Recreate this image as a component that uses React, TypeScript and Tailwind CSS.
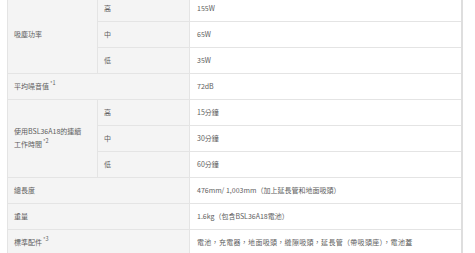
import React from 'react';

const font = { fontFamily: '"Noto Sans CJK TC", "Noto Sans", sans-serif' };

function Sup({ n }: { n: string }) {
  return <span className="text-[5.5px] ml-[1px] relative -top-[4px]">*{n}</span>;
}

export default function App() {
  const cellL = 'bg-[#f4f4f4] border border-[#e4e4e4] px-[6px] align-middle';
  const cellV = 'bg-white border border-[#e4e4e4] px-[7px] align-middle';

  return (
    <div className="w-[475px] h-[253px] overflow-hidden bg-white text-[#5e5e5e]" style={font}>
      <table className="ml-[7px] -mt-[5px] w-[456px] border-collapse table-fixed border-r-2 border-r-[#dedede] text-[7px]">
        <colgroup>
          <col className="w-[90px]" />
          <col className="w-[92px]" />
          <col />
        </colgroup>
        <tbody>
          <tr className="h-[26px]">
            <td rowSpan={3} className={cellL}>吸塵功率</td>
            <td className={cellL}>高</td>
            <td className={cellV}>155W</td>
          </tr>
          <tr className="h-[26px]">
            <td className={cellL}>中</td>
            <td className={cellV}>65W</td>
          </tr>
          <tr className="h-[26px]">
            <td className={cellL}>低</td>
            <td className={cellV}>35W</td>
          </tr>
          <tr className="h-[26px]">
            <td colSpan={2} className={cellL}>
              平均噪音值<Sup n="1" />
            </td>
            <td className={cellV}>72dB</td>
          </tr>
          <tr className="h-[26px]">
            <td rowSpan={3} className={cellL + ' leading-[13px]'}>
              使用BSL36A18的連續
              <br />
              工作時間<Sup n="2" />
            </td>
            <td className={cellL}>高</td>
            <td className={cellV}>15分鐘</td>
          </tr>
          <tr className="h-[26px]">
            <td className={cellL}>中</td>
            <td className={cellV}>30分鐘</td>
          </tr>
          <tr className="h-[26px]">
            <td className={cellL}>低</td>
            <td className={cellV}>60分鐘</td>
          </tr>
          <tr className="h-[26px]">
            <td colSpan={2} className={cellL}>總長度</td>
            <td className={cellV}>476mm/ 1,003mm（加上延長管和地面吸頭）</td>
          </tr>
          <tr className="h-[26px]">
            <td colSpan={2} className={cellL}>重量</td>
            <td className={cellV}>1.6kg（包含BSL36A18電池）</td>
          </tr>
          <tr className="h-[26px]">
            <td colSpan={2} className={cellL}>
              標準配件<Sup n="3" />
            </td>
            <td className={cellV + ' tracking-[0.3px]'}>電池，充電器，地面吸頭，縫隙吸頭，延長管（帶吸頭座），電池蓋</td>
          </tr>
        </tbody>
      </table>
    </div>
  );
}
